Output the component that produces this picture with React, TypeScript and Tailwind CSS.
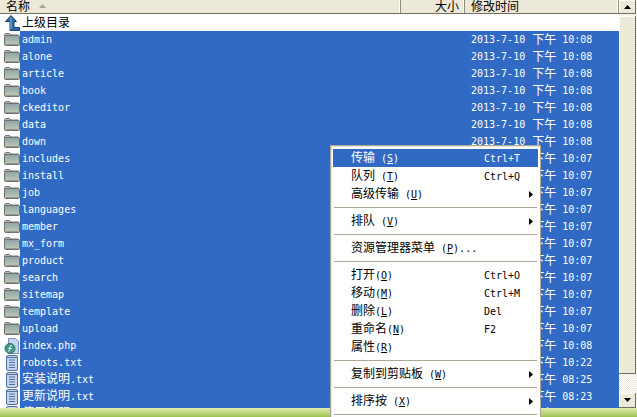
import React from 'react';

type IconKind = 'folder' | 'php' | 'txt';

interface FileRow {
  name: string;
  time: string;
  icon: IconKind;
}

const folders1 = ['admin', 'alone', 'article', 'book', 'ckeditor', 'data', 'down'];
const folders2 = ['includes', 'install', 'job', 'languages', 'member', 'mx_form', 'product', 'search', 'sitemap', 'template', 'upload'];

const rows: FileRow[] = [
  ...folders1.map(name => ({ name, time: '10:08', icon: 'folder' as IconKind })),
  ...folders2.map(name => ({ name, time: '10:07', icon: 'folder' as IconKind })),
  { name: 'index.php', time: '10:08', icon: 'php' },
  { name: 'robots.txt', time: '10:22', icon: 'txt' },
  { name: '安装说明.txt', time: '08:25', icon: 'txt' },
  { name: '更新说明.txt', time: '08:23', icon: 'txt' },
  { name: '使用说明.txt', time: '08:23', icon: 'txt' },
];

// Latin at 10px mono gives the 6px advance, CJK stays 12px
const Mixed: React.FC<{ text: string }> = ({ text }) => (
  <>
    {text.split(/([\u4e00-\u9fff]+)/).filter(Boolean).map((part, i) =>
      /[\u4e00-\u9fff]/.test(part) ? (
        <span key={i} className="text-[12px]">{part}</span>
      ) : (
        <span key={i} className="text-[10px]">{part}</span>
      )
    )}
  </>
);

const FolderIcon = () => (
  <svg width="16" height="16" viewBox="0 1 16 16" className="shrink-0">
    <defs>
      <linearGradient id="folderBody" x1="0" y1="0" x2="0" y2="1">
        <stop offset="0" stopColor="#8fa3a8" />
        <stop offset="1" stopColor="#c0ccb4" />
      </linearGradient>
    </defs>
    <path d="M.5 5V3.500L1.500 2.500h4l1.500 1.500h7.500V5z" fill="#b4babc" stroke="#767674" />
    <rect x="0.500" y="4.500" width="15" height="10" rx="1" fill="url(#folderBody)" stroke="#70706e" />
    <path d="M1.500 13.500h13" stroke="#96968f" />
  </svg>
);

const TxtIcon = () => (
  <svg width="16" height="16" viewBox="0 0 16 16" className="shrink-0">
    <rect x="2.500" y="0.500" width="11" height="15" rx="1.500" fill="#c6d4ec" stroke="#4f6f9f" />
    <path d="M2.500 2.500h11" stroke="#4f6f9f" />
    <path d="M5 5h6M5 7.500h6M5 10h6M5 12.500h6" stroke="#4f6f9f" strokeWidth="1" />
  </svg>
);

const PhpIcon = () => (
  <svg width="16" height="16" viewBox="0 0 16 16" className="shrink-0">
    <path d="M4.500.5h7l3 3v12h-10z" fill="#c6d4ec" stroke="#7f93b5" />
    <circle cx="6" cy="10.500" r="5" fill="#3f9a8a" stroke="#2f6f6a" />
    <path d="M8 7.500C6.500 7 6 8.500 5.800 10.500S5 13.500 3.800 13M4.500 10.500h3" fill="none" stroke="#fff" strokeWidth="1" />
  </svg>
);

// arrow with a foot running right, as in the parent-folder row
const UpIcon = () => (
  <svg width="16" height="16" viewBox="0 0 16 16" className="shrink-0">
    <path d="M7 .5 12.500 6.500H10V12.500H15.500V15.500H6V6.500H1.500z" fill="#2a6aa6" stroke="#17426f" strokeWidth="1" />
    <path d="M7 2.500 7 14" fill="none" stroke="#8fbce0" strokeWidth="1" />
  </svg>
);

const icons: Record<IconKind, React.FC> = { folder: FolderIcon, txt: TxtIcon, php: PhpIcon };

const HeaderCell: React.FC<{ className: string; children: React.ReactNode }> = ({ className, children }) => (
  <div className={`h-[13px] flex items-end overflow-hidden bg-[#ece9d8] border-r border-r-[#8f8d7f] shadow-[inset_-1px_0_0_#fff] ${className}`}>
    {children}
  </div>
);

interface MenuEntry {
  label?: string;
  key_?: string;
  tail?: string;
  gap?: boolean;
  shortcut?: string;
  arrow?: boolean;
  active?: boolean;
}

const menu: MenuEntry[] = [
  { label: '传输', key_: 'S', gap: true, shortcut: 'Ctrl+T', active: true },
  { label: '队列', key_: 'T', gap: true, shortcut: 'Ctrl+Q' },
  { label: '高级传输', key_: 'U', gap: true, arrow: true },
  {},
  { label: '排队', key_: 'V', gap: true, arrow: true },
  {},
  { label: '资源管理器菜单', key_: 'P', gap: true, tail: '...' },
  {},
  { label: '打开', key_: 'O', shortcut: 'Ctrl+O' },
  { label: '移动', key_: 'M', shortcut: 'Ctrl+M' },
  { label: '删除', key_: 'L', shortcut: 'Del' },
  { label: '重命名', key_: 'N', shortcut: 'F2' },
  { label: '属性', key_: 'R' },
  {},
  { label: '复制到剪贴板', key_: 'W', gap: true, arrow: true },
  {},
  { label: '排序按', key_: 'X', gap: true, arrow: true },
  {},
];

const ContextMenu = () => (
  <div className="absolute left-[330px] top-[145px] w-[211px] h-[290px] bg-white border border-[#aca899] shadow-[inset_1px_1px_0_#ece9d8] px-[2px] pt-[3px]">
    {menu.map((item, i) =>
      item.label ? (
        <div key={i} className={`h-[18px] flex items-center relative pl-[18px] ${item.active ? 'bg-[#316ac5] text-white' : 'text-black'}`}>
          <span className="text-[12px]">{item.label}</span>
          <span className={`text-[10px] ${item.gap ? 'ml-[6px]' : ''}`}>
            (<span className="underline">{item.key_}</span>){item.tail}
          </span>
          {item.shortcut && <span className="absolute left-[151px] text-[10px]">{item.shortcut}</span>}
          {item.arrow && (
            <svg width="4" height="7" viewBox="0 0 4 7" className="absolute right-[5px]">
              <path d="M0 0l4 3.500L0 7z" fill="#000" />
            </svg>
          )}
        </div>
      ) : (
        <div key={i} className="h-[9px] flex items-center px-[1px]">
          <div className="h-[1px] w-full bg-[#aca899]" />
        </div>
      )
    )}
  </div>
);

const ScrollButton: React.FC<{ up?: boolean; className?: string }> = ({ up, className = '' }) => (
  <div className={`w-[17px] flex items-center justify-center bg-[#ece9d8] border-r border-b border-r-[#716f64] border-b-[#716f64] shadow-[inset_1px_1px_0_#fff] ${className}`}>
    <svg width="7" height="4" viewBox="0 0 7 4">
      <path d={up ? 'M3.500 0 7 4H0z' : 'M0 0h7L3.500 4z'} fill="#000" />
    </svg>
  </div>
);

export default function App() {
  return (
    <div className="relative w-[637px] h-[417px] overflow-hidden bg-white font-['DejaVu_Sans_Mono','Noto_Sans_CJK_SC',monospace]">
      <div className="flex h-[408px]">
        <div className="w-[619px] flex flex-col overflow-hidden">
          <div className="flex shrink-0 border-b border-b-[#716f64]">
            <HeaderCell className="w-[401px] pl-[6px]">
              <span className="text-[12px] leading-[12px]">名称</span>
              <svg width="7" height="4" viewBox="0 0 7 4" className="ml-[9px] mb-[5px]">
                <path d="M3.500 0 7 4H0z" fill="#aca899" />
              </svg>
            </HeaderCell>
            <HeaderCell className="w-[64px] justify-end pr-[5px]">
              <span className="text-[12px] leading-[12px]">大小</span>
            </HeaderCell>
            <HeaderCell className="w-[154px] pl-[6px]">
              <span className="text-[12px] leading-[12px]">修改时间</span>
            </HeaderCell>
          </div>
          <div className="h-[17px] shrink-0 flex items-center pl-[4px] gap-[2px] text-black">
            <UpIcon />
            <span className="text-[12px]">上级目录</span>
          </div>
          {rows.map(row => {
            const Icon = icons[row.icon];
            return (
              <div key={row.name} className="h-[17px] shrink-0 flex items-center pl-[4px]">
                <Icon />
                <div className="flex-1 h-full flex items-center bg-[#316ac5] text-white">
                  <span className="w-[451px] pl-[2px] whitespace-nowrap text-[10px] leading-[12px]"><Mixed text={row.name} /></span>
                  <span className="text-[10px] whitespace-nowrap">2013-7-10</span>
                  <span className="text-[12px] ml-[7px]">下午</span>
                  <span className="text-[10px] ml-[6px]">{row.time}</span>
                </div>
              </div>
            );
          })}
        </div>
        <div className="w-[18px] flex flex-col bg-[repeating-conic-gradient(#ece9d8_0_25%,#ffffff_0_50%)] bg-[length:2px_2px]">
          <ScrollButton up className="h-[14px]" />
          <div className="w-[17px] h-[358px] mt-[2px] bg-[#ece9d8] border-r border-b border-r-[#716f64] border-b-[#716f64] shadow-[inset_1px_1px_0_#fff]" />
          <div className="flex-1" />
          <ScrollButton className="h-[15px]" />
        </div>
      </div>
      <div className="h-[9px] bg-gradient-to-b from-[#e4edb0] to-[#9cc24a]" />
      <ContextMenu />
    </div>
  );
}
